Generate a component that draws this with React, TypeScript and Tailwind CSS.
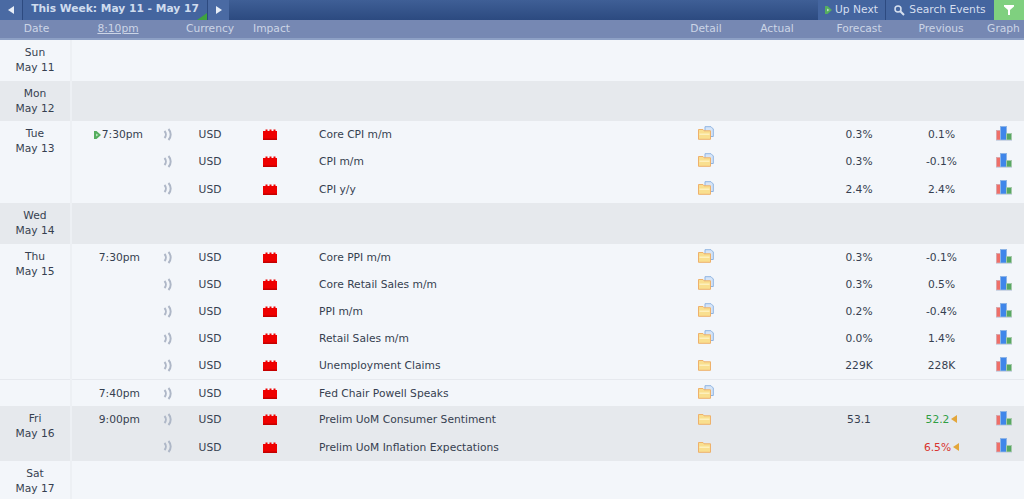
import React from "react";

const COLS = "grid grid-cols-[73px_71px_46px_40px_80px_370px_50px_85px_88px_76px_45px]";
const FONT = "font-['DejaVu_Sans',sans-serif]";

function Sound() {
  return (
    <svg width="10" height="13" viewBox="0 0 10 13" fill="none" stroke="#aeb7c7" strokeWidth="2">
      <path d="M1.500 3C3.300 5 3.300 8 1.500 10" />
      <path d="M5.500 1C8.400 4.200 8.400 8.800 5.500 12" />
    </svg>
  );
}

function Impact() {
  return (
    <svg width="14" height="11" viewBox="0 0 14 11">
      <path d="M0 2h2.500V.6h2V2h2V.6h2V2h2V.6h2V2H14v9H0z" fill="#ee0000" />
      <rect x="0" y="9.500" width="14" height="1.500" fill="#c40000" />
    </svg>
  );
}

function Folder({ open }: { open: boolean }) {
  return (
    <svg width="16" height="14" viewBox="0 0 16 14">
      {open && <path d="M7 .7h6l2.300 2.300v7.500H7z" fill="#d5e4f7" stroke="#8fb4e2" />}
      <path d="M.5 3.500h4.500l1 1.300h6.500v8.500H.5z" fill="#f9df8f" stroke="#eeb16b" />
      <path d="M1.500 7.500h10v1.500h-10z" fill="#fdf0bd" />
    </svg>
  );
}

function Graph() {
  return (
    <svg width="16" height="15" viewBox="0 0 16 15">
      <rect x=".5" y="4.500" width="5" height="9.500" fill="#ef6f68" stroke="#d9a6ab" />
      <rect x="4.500" y=".5" width="6" height="13.500" fill="#3f86ea" stroke="#8db4e6" />
      <rect x="10.500" y="7.500" width="5" height="6.500" fill="#58a862" stroke="#a5c9aa" />
      <rect x="0" y="14" width="16" height="1" fill="#cdd6e6" />
    </svg>
  );
}

function Flag() {
  return (
    <svg width="6" height="8" viewBox="0 0 6 8" className="shrink-0 mb-[2px]">
      <path d="M6 0v8L0 4z" fill="#e3a63b" />
    </svg>
  );
}

function Play({ className }: { className?: string }) {
  return (
    <svg width="7" height="8" viewBox="0 0 7 8" className={`shrink-0 ${className ?? ""}`}>
      <path d="M0 0h2.500L7 4 2.500 8H0z" fill="#55ad5f" />
      <path d="M2 2.500L4.500 4 2 5.500z" fill="#b6e0ba" />
    </svg>
  );
}

type Ev = {
  time?: string;
  play?: boolean;
  name: string;
  open?: boolean;
  forecast?: string;
  prev?: string;
  prevColor?: string;
  graph?: boolean;
  flag?: boolean;
  h: string;
  line?: boolean;
};

function Row({ e }: { e: Ev }) {
  return (
    <div className={`${COLS} ${e.h} items-center text-[#363f50] ${e.line ? "border-b border-[#e6e9ee]" : ""}`}>
      <div className={`col-start-2 flex items-center justify-end pt-[2px] ${e.play ? "pr-[1px]" : "pr-[4px]"}`}>
        {e.play && <Play className="mr-[1px]" />}
        <span>{e.time}</span>
      </div>
      <div className="flex justify-center pl-[2px] pb-[1px]"><Sound /></div>
      <div className="text-center pt-[2px]">USD</div>
      <div className="flex justify-center"><Impact /></div>
      <div className="pl-[9px] pt-[2px] whitespace-nowrap">{e.name}</div>
      <div className="flex justify-center pl-[2px] pb-[3px]"><Folder open={e.open ?? true} /></div>
      <div />
      <div className="text-center pt-[2px]">{e.forecast}</div>
      <div className={`flex items-center justify-center gap-[2px] pl-[1px] pt-[2px] ${e.prevColor ?? ""}`}>
        <span>{e.prev}</span>
        {e.flag && <Flag />}
      </div>
      <div className="flex justify-center pl-[4px] pb-[3px]">{e.graph !== false && <Graph />}</div>
    </div>
  );
}

function Day({ a, b, alt, h, evs }: { a: string; b: string; alt?: boolean; h?: string; evs?: Ev[] }) {
  return (
    <div className={`relative ${alt ? "bg-[#e6e9ed]" : "bg-[#f3f6fa]"} ${h ?? ""}`}>
      <div className="absolute left-0 top-0 bottom-0 w-[72px] border-r-2 border-[#edf0f4] pt-[5px] text-center leading-[15px] text-[#363f50]">
        <div>{a}</div>
        <div>{b}</div>
      </div>
      {evs?.map((e, i) => <Row key={i} e={e} />)}
    </div>
  );
}

const H = "h-[27px]";

export default function App() {
  return (
    <div className={`${FONT} h-[499px] w-[1024px] overflow-hidden bg-[#f3f6fa] text-[10.700px]`}>
      <div className="flex h-[20px] items-stretch justify-between bg-gradient-to-b from-[#3f5f96] to-[#2c4a80] text-[#d5dfef]">
        <div className="flex">
          <div className="flex w-[22px] items-center justify-center bg-[#4a6aa3]">
            <svg width="6" height="8" viewBox="0 0 6 8"><path d="M6 0v8L0 4z" fill="#e8eef7" /></svg>
          </div>
          <div className="relative flex w-[186px] items-center justify-center border-x border-[#2d4a80] bg-[#44659f] pb-[1px] font-bold text-[#cfdcee]">
            This Week: May 11 - May 17
            <svg width="10" height="7" viewBox="0 0 10 7" className="absolute right-0 bottom-0"><path d="M10 0v7H0z" fill="#3ea33e" /></svg>
          </div>
          <div className="flex w-[21px] items-center justify-center bg-[#4a6aa3]">
            <svg width="6" height="8" viewBox="0 0 6 8"><path d="M0 0v8l6-4z" fill="#e8eef7" /></svg>
          </div>
        </div>
        <div className="flex">
          <div className="flex w-[68px] items-center justify-center gap-[3px] border-r border-[#2d4a80] bg-[#44659f]">
            <Play />
            <span>Up Next</span>
          </div>
          <div className="flex w-[108px] items-center justify-center gap-[4px] bg-[#44659f]">
            <svg width="11" height="11" viewBox="0 0 11 11" fill="none" stroke="#d5dfef" strokeWidth="1.500">
              <circle cx="4" cy="4" r="3" />
              <path d="M6.300 6.300L10 10" strokeWidth="2" />
            </svg>
            <span>Search Events</span>
          </div>
          <div className="flex w-[30px] items-center justify-center bg-[#7fd07f]">
            <svg width="10" height="10" viewBox="0 0 10 10"><path d="M0 0h10v1.500L6 5v5H4V5L0 1.500z" fill="#fff" /></svg>
          </div>
        </div>
      </div>

      <div className={`${COLS} h-[20px] items-center border-b-2 border-[#8da0c5] bg-[#7688b3] pt-[1px] text-[#ccd5e6]`}>
        <div className="text-center">Date</div>
        <div className="text-center pl-[19px] whitespace-nowrap underline">8:10pm</div>
        <div className="col-span-2 pl-[42px] whitespace-nowrap">Currency</div>
        <div className="pl-[23px] whitespace-nowrap">Impact</div>
        <div />
        <div className="text-center pl-[2px]">Detail</div>
        <div className="text-center pl-[9px]">Actual</div>
        <div className="text-center">Forecast</div>
        <div className="text-center">Previous</div>
        <div className="text-center pl-[4px] whitespace-nowrap">Graph</div>
      </div>

      <Day a="Sun" b="May 11" h="h-[41px]" />
      <Day a="Mon" b="May 12" alt h="h-[40px]" />
      <Day
        a="Tue"
        b="May 13"
        h="h-[82px]"
        evs={[
          { time: "7:30pm", play: true, name: "Core CPI m/m", forecast: "0.3%", prev: "0.1%", h: "h-[27px]" },
          { name: "CPI m/m", forecast: "0.3%", prev: "-0.1%", h: "h-[27px]" },
          { name: "CPI y/y", forecast: "2.4%", prev: "2.4%", h: "h-[28px]" },
        ]}
      />
      <Day a="Wed" b="May 14" alt h="h-[41px]" />
      <Day
        a="Thu"
        b="May 15"
        h="h-[162px]"
        evs={[
          { time: "7:30pm", name: "Core PPI m/m", forecast: "0.3%", prev: "-0.1%", h: H },
          { name: "Core Retail Sales m/m", forecast: "0.3%", prev: "0.5%", h: H },
          { name: "PPI m/m", forecast: "0.2%", prev: "-0.4%", h: H },
          { name: "Retail Sales m/m", forecast: "0.0%", prev: "1.4%", h: H },
          { name: "Unemployment Claims", open: false, forecast: "229K", prev: "228K", h: "h-[28px]", line: true },
          { time: "7:40pm", name: "Fed Chair Powell Speaks", graph: false, h: H },
        ]}
      />
      <Day
        a="Fri"
        b="May 16"
        alt
        h="h-[55px]"
        evs={[
          { time: "9:00pm", name: "Prelim UoM Consumer Sentiment", open: false, forecast: "53.1", prev: "52.2", prevColor: "text-[#2f9e44]", flag: true, h: H },
          { name: "Prelim UoM Inflation Expectations", open: false, prev: "6.5%", prevColor: "text-[#d9332e]", flag: true, h: "h-[28px]" },
        ]}
      />
      <Day a="Sat" b="May 17" h="h-[38px]" />
    </div>
  );
}
